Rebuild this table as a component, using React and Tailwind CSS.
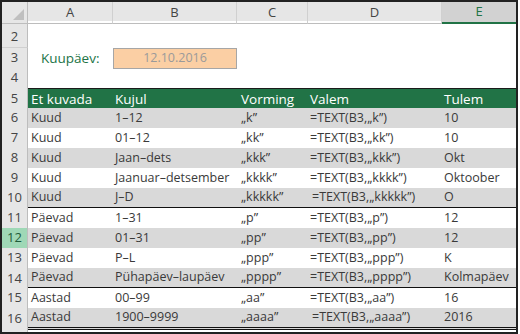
import React from 'react';

const cols = 'grid grid-cols-[26px_85px_124px_71px_134px_74px]';
const font = { fontFamily: '"Open Sans", "Noto Sans", sans-serif' };

const rows = [
    { n: 6, a: 'Kuud', b: '1–12', c: '„k”', d: '=TEXT(B3,„k”)', e: '10' },
    { n: 7, a: 'Kuud', b: '01–12', c: '„kk”', d: '=TEXT(B3,„kk”)', e: '10' },
    { n: 8, a: 'Kuud', b: 'Jaan–dets', c: '„kkk”', d: '=TEXT(B3,„kkk”)', e: 'Okt' },
    { n: 9, a: 'Kuud', b: 'Jaanuar–detsember', c: '„kkkk”', d: '=TEXT(B3,„kkkk”)', e: 'Oktoober' },
    { n: 10, a: 'Kuud', b: 'J–D', c: '„kkkkk”', d: '=TEXT(B3,„kkkkk”)', e: 'O', indent: true, line: 'thick' },
    { n: 11, a: 'Päevad', b: '1–31', c: '„p”', d: '=TEXT(B3,„p”)', e: '12' },
    { n: 12, a: 'Päevad', b: '01–31', c: '„pp”', d: '=TEXT(B3,„pp”)', e: '12', selected: true },
    { n: 13, a: 'Päevad', b: 'P–L', c: '„ppp”', d: '=TEXT(B3,„ppp”)', e: 'K' },
    { n: 14, a: 'Päevad', b: 'Pühapäev–laupäev', c: '„pppp”', d: '=TEXT(B3,„pppp”)', e: 'Kolmapäev', line: 'double' },
    { n: 15, a: 'Aastad', b: '00–99', c: '„aa”', d: '=TEXT(B3,„aa”)', e: '16' },
    { n: 16, a: 'Aastad', b: '1900–9999', c: '„aaaa”', d: '=TEXT(B3,„aaaa”)', e: '2016', indent: true, line: 'double' },
];

const RowHead = ({ children, selected, className = '' }) => (
    <div
        className={`flex items-center justify-center border-r border-b border-r-[#bdbdbd] border-b-[#d0d0d0] text-[13px] ${
            selected ? 'bg-[#9fd8b6] text-[#1e5c3a]' : 'bg-[#e6e6e6] text-[#444]'
        } ${className}`}
    >
        {children}
    </div>
);

const App = () => {
    return (
        <div className="w-[518px] h-[334px] bg-white border-2 border-[#222] overflow-hidden" style={font}>
            {/* column letters */}
            <div className={`${cols} h-[19px] bg-[#e6e6e6] text-[13px] text-[#444]`}>
                <div className="relative border-r border-b border-[#bdbdbd]">
                    <svg className="absolute right-[3px] bottom-[3px]" width="11" height="11" viewBox="0 0 11 11">
                        <polygon points="11,0 11,11 0,11" fill="#bfbfbf" />
                    </svg>
                </div>
                <div className="flex items-center justify-center border-r border-b border-r-[#d0d0d0] border-b-[#bdbdbd]">A</div>
                <div className="flex items-center justify-center border-r border-b border-r-[#d0d0d0] border-b-[#bdbdbd]">B</div>
                <div className="flex items-center justify-center border-r border-b border-r-[#d0d0d0] border-b-[#bdbdbd]">C</div>
                <div className="flex items-center justify-center border-r border-b border-r-[#d0d0d0] border-b-[#bdbdbd]">D</div>
                <div className="flex items-center justify-center bg-[#d2d2d2] text-[#217346] border-b-2 border-[#217346]">E</div>
            </div>

            {/* rows 2-4 */}
            <div className={`${cols} h-[27px]`}>
                <RowHead className="items-end pb-[1px]">2</RowHead>
                <div className="col-span-5" />
            </div>
            <div className={`${cols} h-[20px]`}>
                <RowHead>3</RowHead>
                <div className="flex items-center pl-[13px] text-[13.5px] text-[#217346]">Kuupäev:</div>
                <div className="flex items-center justify-center bg-[#fbcfa4] border border-[#a6a6a6] text-[12.5px] text-[#9a9a9a]">
                    12.10.2016
                </div>
                <div className="col-span-3" />
            </div>
            <div className={`${cols} h-[20px]`}>
                <RowHead>4</RowHead>
                <div className="col-span-5" />
            </div>

            {/* table header */}
            <div className={`${cols} h-[20px]`}>
                <RowHead>5</RowHead>
                <div className="col-span-5 grid grid-cols-[85px_124px_71px_134px_74px] bg-[#217346] text-white text-[13.5px] border-t border-b border-[#1b1b1b]">
                    <div className="flex items-center pl-[3px]">Et kuvada</div>
                    <div className="flex items-center pl-[2px]">Kujul</div>
                    <div className="flex items-center pl-[4px]">Vorming</div>
                    <div className="flex items-center pl-[2px]">Valem</div>
                    <div className="flex items-center pl-[2px]">Tulem</div>
                </div>
            </div>

            {/* data rows */}
            {rows.map((r, i) => {
                const shade = i % 2 === 0 ? 'bg-[#d9d9d9]' : 'bg-white';
                const line =
                    r.line === 'thick'
                        ? 'border-b-2 border-[#111]'
                        : r.line === 'double'
                        ? 'border-b-[3px] border-double border-[#111]'
                        : '';
                return (
                    <div key={r.n} className={`${cols} h-[20px]`}>
                        <RowHead selected={r.selected}>{r.n}</RowHead>
                        <div className={`col-span-5 grid grid-cols-[85px_124px_71px_134px_74px] text-[12.5px] text-[#3a3a3a] ${shade} ${line}`}>
                            <div className="flex items-center pl-[3px]">{r.a}</div>
                            <div className="flex items-center pl-[2px]">{r.b}</div>
                            <div className="flex items-center pl-[4px]">{r.c}</div>
                            <div className={`flex items-center ${r.indent ? 'pl-[4px]' : 'pl-[2px]'}`}>{r.d}</div>
                            <div className="flex items-center pl-[2px]">{r.e}</div>
                        </div>
                    </div>
                );
            })}

            <div className={`${cols} h-[6px]`}>
                <RowHead className="border-b-0" />
                <div className="col-span-5" />
            </div>
        </div>
    );
};

export default App;
